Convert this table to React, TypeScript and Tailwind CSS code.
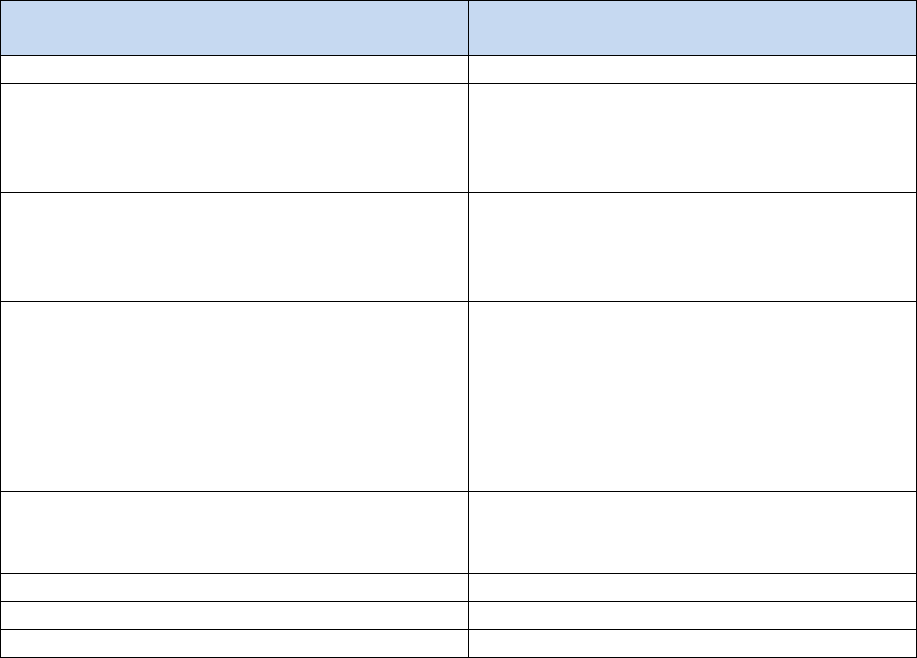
import React from "react";

const rowHeights = ["h-[28px]", "h-[109px]", "h-[109px]", "h-[190px]", "h-[82px]", "h-[28px]", "h-[28px]", "h-[28px]"];

const App: React.FC = () => {
  return (
    <div className="w-[917px] h-[658px] bg-white font-['Liberation_Sans',sans-serif]">
      <div className="grid grid-cols-[468px_448px] border-t border-l border-black">
        <div className="h-[55px] bg-[#c6d9f1] border-r border-b border-black" />
        <div className="h-[55px] bg-[#c6d9f1] border-r border-b border-black" />
        {rowHeights.map((h, i) => (
          <React.Fragment key={i}>
            <div className={`${h} border-r border-b border-black`} />
            <div className={`${h} border-r border-b border-black`} />
          </React.Fragment>
        ))}
      </div>
    </div>
  );
};

export default App;
